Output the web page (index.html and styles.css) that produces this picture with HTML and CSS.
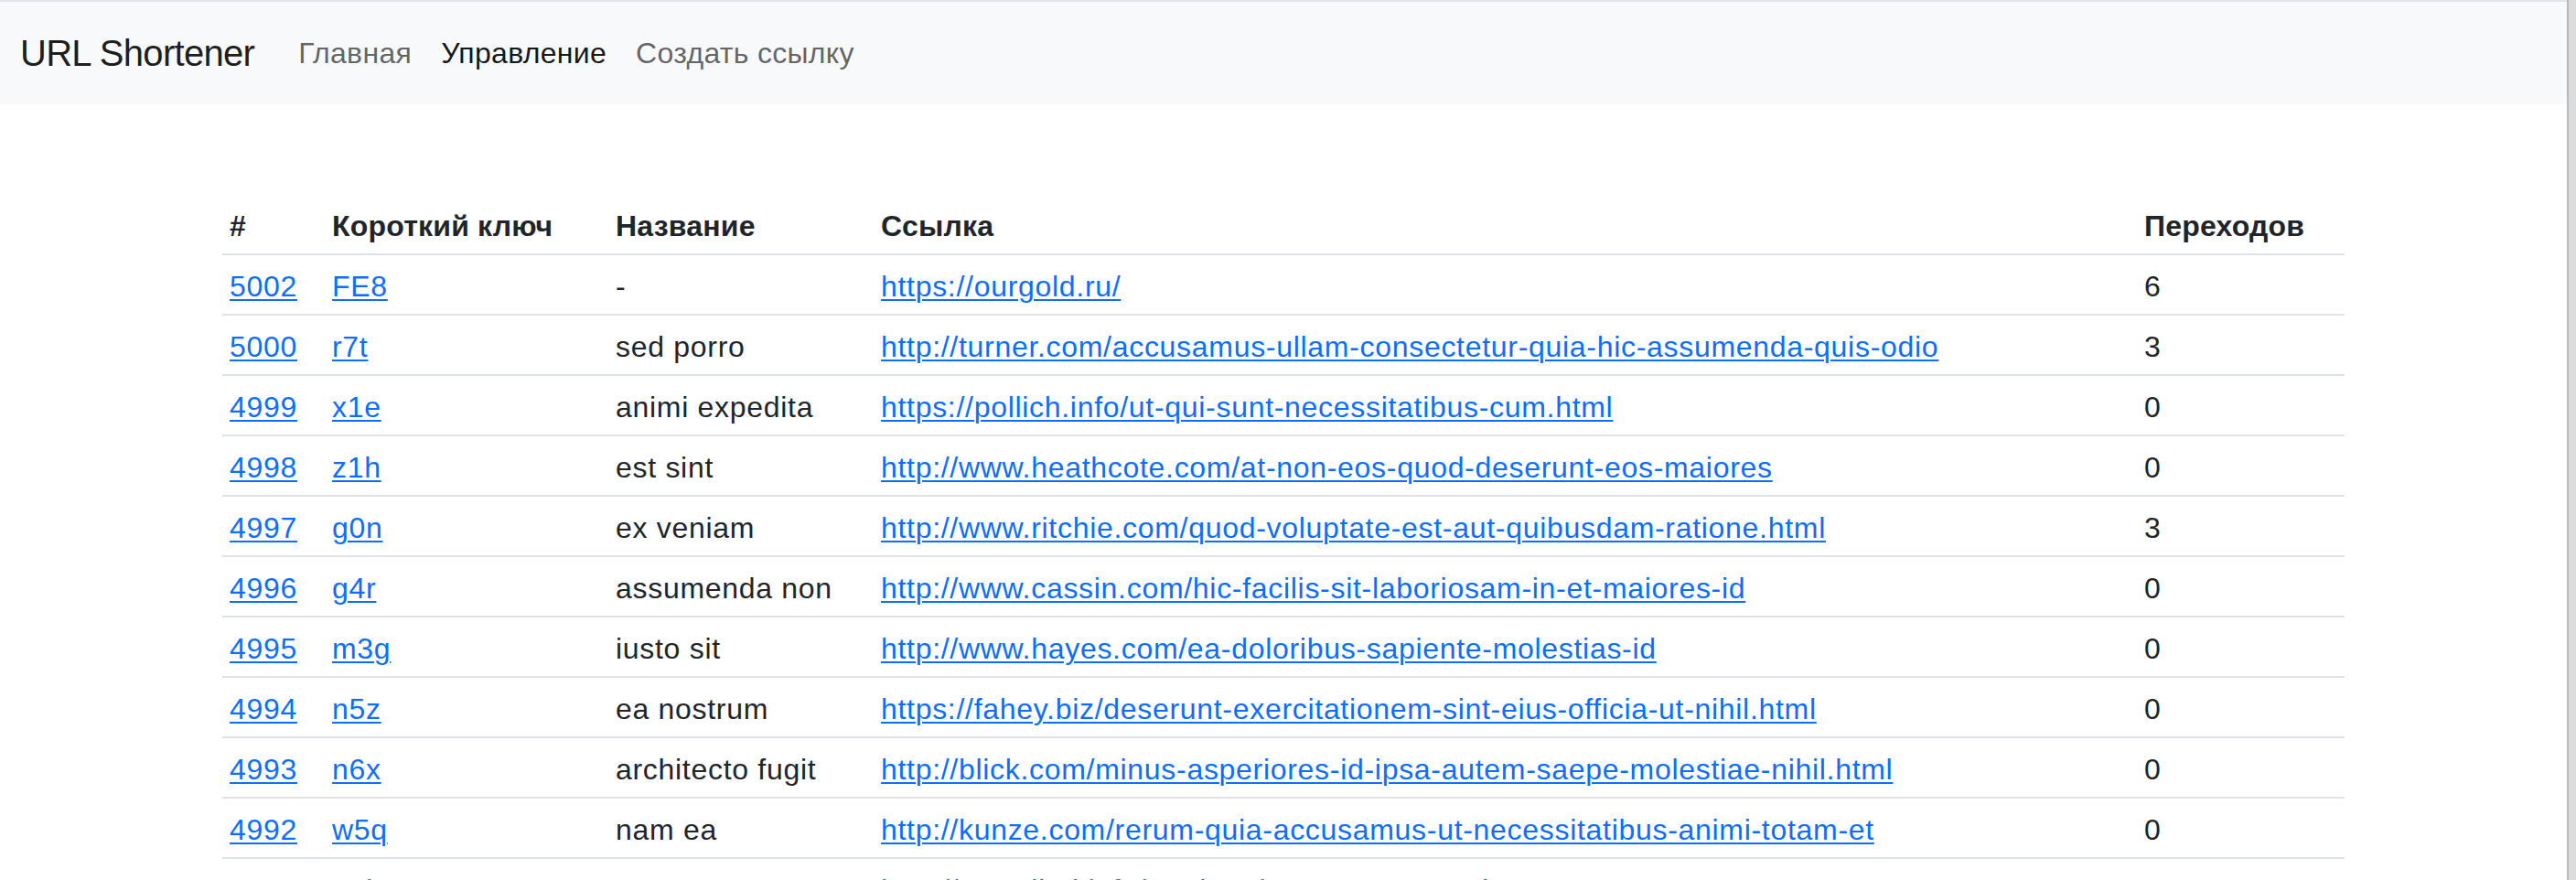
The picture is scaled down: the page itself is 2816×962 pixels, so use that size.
FILE: index.html
```html
<!DOCTYPE html>
<html lang="ru">
<head>
<meta charset="utf-8">
<title>URL Shortener</title>
<link rel="stylesheet" href="styles.css">
</head>
<body>
<div class="page">
  <nav class="navbar">
    <a class="brand" href="#">URL Shortener</a>
    <ul class="nav">
      <li><a class="nav-link" href="#">Главная</a></li>
      <li><a class="nav-link active" href="#">Управление</a></li>
      <li><a class="nav-link" href="#">Создать ссылку</a></li>
    </ul>
  </nav>
  <main class="container">
    <table class="links">
      <thead>
        <tr>
          <th class="c-id">#</th>
          <th class="c-key">Короткий ключ</th>
          <th class="c-name">Название</th>
          <th class="c-url">Ссылка</th>
          <th class="c-hits">Переходов</th>
        </tr>
      </thead>
      <tbody>
        <tr><td><a href="#">5002</a></td><td><a href="#">FE8</a></td><td>-</td><td><a href="#">https://ourgold.ru/</a></td><td>6</td></tr>
        <tr><td><a href="#">5000</a></td><td><a href="#">r7t</a></td><td>sed porro</td><td><a href="#">http://turner.com/accusamus-ullam-consectetur-quia-hic-assumenda-quis-odio</a></td><td>3</td></tr>
        <tr><td><a href="#">4999</a></td><td><a href="#">x1e</a></td><td>animi expedita</td><td><a href="#">https://pollich.info/ut-qui-sunt-necessitatibus-cum.html</a></td><td>0</td></tr>
        <tr><td><a href="#">4998</a></td><td><a href="#">z1h</a></td><td>est sint</td><td><a href="#">http://www.heathcote.com/at-non-eos-quod-deserunt-eos-maiores</a></td><td>0</td></tr>
        <tr><td><a href="#">4997</a></td><td><a href="#">g0n</a></td><td>ex veniam</td><td><a href="#">http://www.ritchie.com/quod-voluptate-est-aut-quibusdam-ratione.html</a></td><td>3</td></tr>
        <tr><td><a href="#">4996</a></td><td><a href="#">g4r</a></td><td>assumenda non</td><td><a href="#">http://www.cassin.com/hic-facilis-sit-laboriosam-in-et-maiores-id</a></td><td>0</td></tr>
        <tr><td><a href="#">4995</a></td><td><a href="#">m3g</a></td><td>iusto sit</td><td><a href="#">http://www.hayes.com/ea-doloribus-sapiente-molestias-id</a></td><td>0</td></tr>
        <tr><td><a href="#">4994</a></td><td><a href="#">n5z</a></td><td>ea nostrum</td><td><a href="#">https://fahey.biz/deserunt-exercitationem-sint-eius-officia-ut-nihil.html</a></td><td>0</td></tr>
        <tr><td><a href="#">4993</a></td><td><a href="#">n6x</a></td><td>architecto fugit</td><td><a href="#">http://blick.com/minus-asperiores-id-ipsa-autem-saepe-molestiae-nihil.html</a></td><td>0</td></tr>
        <tr><td><a href="#">4992</a></td><td><a href="#">w5q</a></td><td>nam ea</td><td><a href="#">http://kunze.com/rerum-quia-accusamus-ut-necessitatibus-animi-totam-et</a></td><td>0</td></tr>
        <tr><td><a href="#">4991</a></td><td><a href="#">a8k</a></td><td>rem ut</td><td><a href="#">http://www.lind.info/et-ab-voluptatem-quo-qui</a></td><td>0</td></tr>
      </tbody>
    </table>
  </main>
</div>
<div class="scrollbar"></div>
</body>
</html>
```
FILE: styles.css
```css
* { box-sizing: border-box; }

html, body {
  margin: 0;
  height: 100%;
  overflow: hidden;
}

body {
  display: flex;
  font-family: "Liberation Sans", Arial, sans-serif;
  font-size: 32px;
  line-height: 1.5;
  color: #212529;
  background: #fff;
}

.page {
  flex: 1;
  min-width: 0;
}

.scrollbar {
  width: 10px;
  flex: none;
  background: #dcdcdc;
  border-left: 2px solid #b9b9b9;
}

/* Navbar */
.navbar {
  display: flex;
  align-items: center;
  background: #f8f9fa;
  border-top: 2px solid #e2e2e9;
  padding: 16px 24px 16px 22px;
}

.brand {
  font-size: 40px;
  line-height: 60px;
  padding: 10px 0;
  margin-right: 32px;
  color: rgba(0, 0, 0, 0.9);
  text-decoration: none;
  letter-spacing: -0.7px;
}

.nav {
  display: flex;
  list-style: none;
  margin: 0;
  padding: 0;
}

.nav-link {
  display: block;
  padding: 16px 16px;
  color: rgba(0, 0, 0, 0.62);
  text-decoration: none;
  letter-spacing: 0.3px;
}

.nav-link.active {
  color: rgba(0, 0, 0, 0.92);
}

/* Table */
.container {
  width: 2320px;
  margin: 0 auto;
  padding-top: 99px;
}

.links {
  width: 100%;
  border-collapse: collapse;
  table-layout: fixed;
  letter-spacing: 0.7px;
}

.links th,
.links td {
  padding: 10px 8px 6px;
  text-align: left;
  vertical-align: top;
  border-bottom: 2px solid #dee2e6;
  white-space: nowrap;
}

.links th {
  font-weight: 700;
  letter-spacing: 0.2px;
}

.c-id { width: 112px; }
.c-key { width: 310px; }
.c-name { width: 290px; }
.c-url { width: 1381px; }
.c-hits { width: 227px; }

.links a {
  color: #0d6efd;
  text-decoration: underline;
  text-decoration-thickness: 2px;
  text-underline-offset: 3px;
}
```
